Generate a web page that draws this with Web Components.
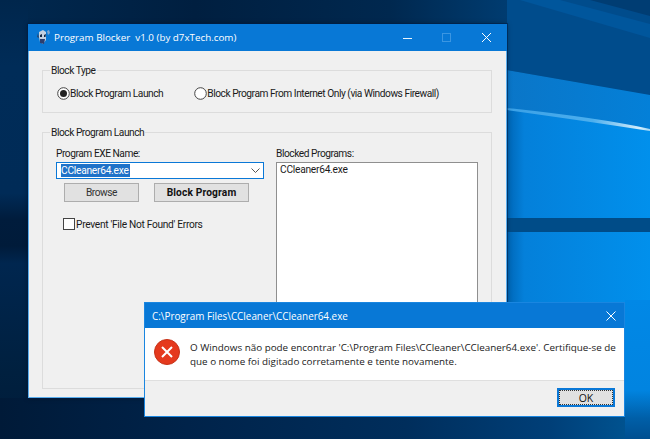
<!DOCTYPE html>
<html><head><meta charset="utf-8"><style>
html,body{margin:0;padding:0;width:650px;height:439px;overflow:hidden;background:#001c3c}
</style></head><body>
<desk-top>
  <app-window style="left:28px;top:24px;width:479px;height:374px" heading="Program Blocker  v1.0 (by d7xTech.com)" app>
    <group-box heading="Block Type" style="height:41px">
      <div style="display:flex;align-items:center;box-sizing:border-box;height:100%;padding:3px 0 0 14px;gap:31px">
        <radio-opt checked>Block Program Launch</radio-opt>
        <radio-opt>Block Program From Internet Only (via Windows Firewall)</radio-opt>
      </div>
    </group-box>
    <group-box heading="Block Program Launch" style="height:255px;margin-top:19px">
      <block-form></block-form>
    </group-box>
  </app-window>
  <error-dialog style="left:144px;top:302px;width:481px;height:115px"></error-dialog>
</desk-top>
<script>
const UI='"Open Sans","Noto Sans",sans-serif', TAH='Roboto,"Liberation Sans",sans-serif';
function def(name,html,init){customElements.define(name,class extends HTMLElement{connectedCallback(){if(this.shadowRoot)return;const r=this.attachShadow({mode:'open'});r.innerHTML=html;init&&init(this,r);}});}
def('desk-top',`<style>:host{display:block;position:relative;width:650px;height:439px;overflow:hidden;font:10.200px ${TAH};letter-spacing:-.46px;color:#1a1a1a}
svg{position:absolute;left:0;top:0}</style>
<svg width="650" height="439" viewBox="0 0 650 439"><defs>
<linearGradient id="a" x1="0" x2="1" y1="0" y2="0"><stop offset="0" stop-color="#00284f"/><stop offset=".3" stop-color="#001f40"/><stop offset=".6" stop-color="#00284f"/><stop offset=".8" stop-color="#003e74"/><stop offset="1" stop-color="#004e8e"/></linearGradient>
<linearGradient id="l" x1="0" x2="0" y1="0" y2="1"><stop offset="0" stop-color="#00264c"/><stop offset=".15" stop-color="#002c58"/><stop offset=".44" stop-color="#002b57"/><stop offset=".5" stop-color="#001c3c"/><stop offset=".56" stop-color="#001b3a"/><stop offset=".6" stop-color="#00264f"/><stop offset=".85" stop-color="#00203f"/><stop offset="1" stop-color="#001c3a"/></linearGradient>
<linearGradient id="b" x1="0" x2="1" y1="0" y2="0"><stop offset="0" stop-color="#0a76c8"/><stop offset="1" stop-color="#0480d8"/></linearGradient>
<linearGradient id="c" x1="0" x2="1" y1="0" y2="0"><stop offset="0" stop-color="#0066b6"/><stop offset=".12" stop-color="#0480da"/><stop offset="1" stop-color="#0190ec"/></linearGradient>
<linearGradient id="d" x1="0" x2="1" y1="0" y2="0"><stop offset="0" stop-color="#001a38"/><stop offset=".3" stop-color="#00234a"/><stop offset=".65" stop-color="#002e5c"/><stop offset=".88" stop-color="#003f78"/><stop offset="1" stop-color="#00528f"/></linearGradient>
<linearGradient id="e" x1="0" x2="0" y1="0" y2="1"><stop offset="0" stop-color="#0188e6"/><stop offset=".65" stop-color="#0184e0"/><stop offset=".85" stop-color="#005fa8"/><stop offset="1" stop-color="#004f90"/></linearGradient>
<linearGradient id="s" x1="0" x2="1" y1="0" y2="0"><stop offset="0" stop-color="#3aa0e6"/><stop offset=".6" stop-color="#4cafee"/><stop offset=".93" stop-color="#d6eefb"/><stop offset="1" stop-color="#9fd6f5"/></linearGradient>
</defs>
<rect width="650" height="439" fill="url(#a)"/>
<rect width="28" height="439" fill="url(#l)"/>
<path d="M507 0H650V95L507 70Z" fill="#004c8c"/>
<path d="M560 0 650 24V38L520 0Z" fill="#00569c"/>
<path d="M590 0H650V16Z" fill="#003d73"/>
<path d="M507 70 650 95V130L507 108Z" fill="url(#b)"/>
<path d="M507 108 640 127 650 130V439H507Z" fill="url(#c)"/>
<path d="M507 108 Q600 118 650 129L650 131 Q600 123 507 110Z" fill="url(#s)"/>
<rect x="507" y="218" width="143" height="14" fill="#004c88"/>
<rect x="625" y="300" width="25" height="139" fill="url(#e)"/>
<rect y="398" width="625" height="41" fill="url(#d)"/>
</svg><slot></slot>`);
def('app-window',`<style>:host{display:flex;flex-direction:column;position:absolute;box-sizing:border-box;border:1px solid #5aaeee;border-top:0;background:#f0f0f0;box-shadow:0 0 0 1px rgba(0,30,70,.55),0 0 5px rgba(0,0,0,.35)}
.t{height:27px;flex:none;background:#0878d6;color:#fff;display:flex;align-items:center;margin:0 -1px;font:9.800px ${UI};letter-spacing:0;white-space:pre}
.i{width:15px;height:17px;margin:0 3px 0 8px;flex:none}
.b{flex:1;padding:19px 14px 0 13px}
.c{margin-left:auto;display:flex;align-items:center}
.c svg{display:block;width:39px;height:12px}
</style>
<div class="t"><svg class="i" viewBox="0 0 15 17"><path d="M3 3 7 1 10 3 10 11 7 15 4 13 3 8Z" fill="#c4d0e0"/><path d="M4 6 6 5 6 8 4 8ZM8 6 10 5 9.500 8 8 8Z" fill="#152a48"/><path d="M4 10 9 10 8 15 4 14Z" fill="#2c3f70"/><path d="M11 2 13 1 14 4 12 6Z" fill="#7fa6cf"/><path d="M2 4 3 9 1 8Z" fill="#27446c"/></svg><span id="h"></span>
<div class="c"><svg viewBox="0 0 39 12"><path d="M13 6.500H22" stroke="#e8f4fd" stroke-width="1"/></svg>
<svg viewBox="0 0 39 12"><rect x="13.500" y="1.500" width="8" height="8" fill="none" stroke="#3b96e2"/></svg>
<svg viewBox="0 0 39 12"><path d="M14 1 23 10M23 1 14 10" stroke="#fff" stroke-width="1"/></svg></div></div>
<div class="b"><slot></slot></div>`,(e,r)=>{r.getElementById('h').textContent=e.getAttribute('heading')});
def('group-box',`<style>:host{display:block;position:relative;box-sizing:content-box;border:1px solid #dcdcdc}
span{position:absolute;left:7px;top:-8px;background:#f0f0f0;padding:0 1px;line-height:15px;white-space:nowrap}</style><span id="h"></span><slot></slot>`,(e,r)=>{r.getElementById('h').textContent=e.getAttribute('heading')});
def('radio-opt',`<style>:host{display:inline-flex;align-items:center;gap:0;white-space:nowrap}
svg{width:13px;height:13px;flex:none}</style><svg viewBox="0 0 13 13"><circle cx="6.500" cy="6.500" r="5.800" fill="#fff" stroke="#444"/><circle id="d" cx="6.500" cy="6.500" r="3.500" fill="#222"/></svg><slot></slot>`,(e,r)=>{if(!e.hasAttribute('checked'))r.getElementById('d').remove()});
def('win-button',`<style>:host{display:inline-flex;align-items:center;justify-content:center;box-sizing:border-box;background:#e1e1e1;border:1px solid #adadad;color:#333;outline-offset:-1px}</style><slot></slot>`);
def('block-form',`<style>:host{display:grid;grid-template-columns:208px 202px;column-gap:12px;padding:14px 0 0 13px}
.l{line-height:14px;height:14px;white-space:nowrap}
.combo{box-sizing:border-box;height:17px;width:208px;margin-top:1px;background:#fff;border:1px solid #0a78d7;display:flex;align-items:center;padding-left:4px;position:relative}
.sel{background:#1f72c8;color:#fff;line-height:13px;padding:0 1px 0 0;letter-spacing:-.25px}
.combo svg{position:absolute;right:3px;top:5px;width:9px;height:6px}
.btns{display:flex;margin:4px 0 0 8px;gap:15px}
.chk{display:flex;align-items:center;gap:1px;margin:16px 0 0 7px;white-space:nowrap;letter-spacing:-.3px}
.box{width:10px;height:10px;border:1px solid #444;background:#fff;flex:none}
.list{box-sizing:border-box;width:202px;height:150px;margin-top:1px;background:#fff;border:1px solid #8f8f8f;padding:0 3px;line-height:14px;letter-spacing:-.25px}
</style>
<div><div class="l">Program EXE Name:</div>
<div class="combo"><span class="sel">CCleaner64.exe</span><svg viewBox="0 0 9 6"><path d="M.5 .5 4.500 4.500 8.500 .5" fill="none" stroke="#555"/></svg></div>
<div class="btns"><win-button style="width:75px;height:19px">Browse</win-button><win-button style="width:95px;height:19px;font-weight:700;color:#111;letter-spacing:.15px">Block Program</win-button></div>
<div class="chk"><div class="box"></div><span>Prevent 'File Not Found' Errors</span></div></div>
<div><div class="l">Blocked Programs:</div><div class="list">CCleaner64.exe</div></div>`);
def('error-dialog',`<style>:host{display:flex;flex-direction:column;position:absolute;box-sizing:border-box;border:1px solid #1a86e0;background:#f0f0f0;color:#1a1a1a;font:9.850px ${UI};letter-spacing:0}
.t{height:25px;flex:none;background:#0878d6;color:#fff;display:flex;align-items:center;justify-content:space-between;padding:0 8px 0 7px;font-size:9.900px}
.t svg{width:10px;height:10px;margin-right:0}
.m{height:52px;flex:none;background:#fff;display:flex;align-items:flex-start;padding-left:9px;border-bottom:1px solid #dfdfdf}
.m svg{width:26px;height:26px;flex:none;margin:11px 10px 0 0}
.m p{margin:12px 0 0;line-height:14px;width:432px}
.f{flex:1;display:flex;justify-content:flex-end;padding:7px 9px 0 0}
</style><div class="t"><span>C:\\Program Files\\CCleaner\\CCleaner64.exe</span><svg viewBox="0 0 10 10"><path d="M.5 .5 9.500 9.500M9.500 .5 .5 9.500" stroke="#fff"/></svg></div>
<div class="m"><svg viewBox="0 0 26 26"><circle cx="13" cy="13" r="12.500" fill="#e5391d" stroke="#c63117"/><path d="M8 8 18 18M18 8 8 18" stroke="#fff" stroke-width="2"/></svg><p>O Windows não pode encontrar 'C:\\Program Files\\CCleaner\\CCleaner64.exe'. Certifique-se de que o nome foi digitado corretamente e tente novamente.</p></div>
<div class="f"><win-button style="width:58px;height:19px;border:2px solid #0a78d7;outline:1px dotted #333;outline-offset:-3px;color:#111;font-size:10.500px;letter-spacing:0">OK</win-button></div>`);
</script></body></html>
